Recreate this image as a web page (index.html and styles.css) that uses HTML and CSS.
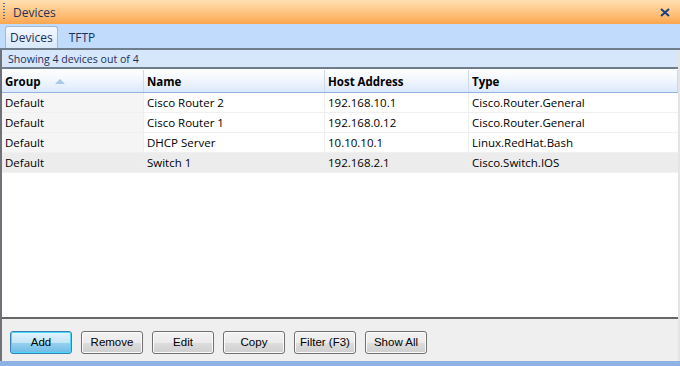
FILE: index.html
```html
<!DOCTYPE html>
<html>
<head>
<meta charset="utf-8">
<link rel="stylesheet" href="styles.css">
</head>
<body>
<div class="window">
  <div class="titlebar">
    <span class="grip"></span>
    <span class="title">Devices</span>
    <svg class="close" width="10" height="9" viewBox="0 0 10 9"><path d="M1 1 L9 8 M9 1 L1 8" stroke="#1b3f7a" stroke-width="2"/></svg>
  </div>
  <div class="tabs">
    <div class="tab active">Devices</div>
    <div class="tab">TFTP</div>
  </div>
  <div class="panel">
    <div class="status">Showing 4 devices out of 4</div>
    <div class="grid">
      <div class="row head">
        <div class="cell c1">Group<span class="sort"></span></div>
        <div class="cell c2">Name</div>
        <div class="cell c3">Host Address</div>
        <div class="cell c4">Type</div>
      </div>
      <div class="row">
        <div class="cell c1">Default</div>
        <div class="cell c2">Cisco Router 2</div>
        <div class="cell c3">192.168.10.1</div>
        <div class="cell c4">Cisco.Router.General</div>
      </div>
      <div class="row">
        <div class="cell c1">Default</div>
        <div class="cell c2">Cisco Router 1</div>
        <div class="cell c3">192.168.0.12</div>
        <div class="cell c4">Cisco.Router.General</div>
      </div>
      <div class="row">
        <div class="cell c1">Default</div>
        <div class="cell c2">DHCP Server</div>
        <div class="cell c3">10.10.10.1</div>
        <div class="cell c4">Linux.RedHat.Bash</div>
      </div>
      <div class="row sel">
        <div class="cell c1">Default</div>
        <div class="cell c2">Switch 1</div>
        <div class="cell c3">192.168.2.1</div>
        <div class="cell c4">Cisco.Switch.IOS</div>
      </div>
    </div>
    <div class="buttons">
      <button class="btn default">Add</button>
      <button class="btn">Remove</button>
      <button class="btn">Edit</button>
      <button class="btn">Copy</button>
      <button class="btn">Filter (F3)</button>
      <button class="btn">Show All</button>
    </div>
  </div>
  <div class="bottombar"></div>
</div>
</body>
</html>
```
FILE: styles.css
```css
html, body {
  margin: 0;
  padding: 0;
  background: #ffffff;
}
.window {
  width: 680px;
  height: 366px;
  display: flex;
  flex-direction: column;
  font-family: "Open Sans", "DejaVu Sans", sans-serif;
  font-size: 11.5px;
  color: #000;
  overflow: hidden;
}
.titlebar {
  height: 24px;
  flex: none;
  display: flex;
  align-items: center;
  background: linear-gradient(#ffdfb0 0%, #ffc888 45%, #fba64e 100%);
}
.grip {
  width: 2px;
  height: 18px;
  margin-left: 3px;
  background: repeating-linear-gradient(#4f6fa8 0 1px, transparent 1px 3px);
}
.title {
  margin-left: 8px;
  font-size: 12px;
  color: #1e2f5a;
}
.close {
  margin-left: auto;
  margin-right: 10px;
}
.tabs {
  height: 26px;
  flex: none;
  background: #c0dbfc;
  display: flex;
  align-items: flex-end;
  padding-left: 5px;
  border-bottom: 2px solid #6f7d8c;
  box-sizing: border-box;
}
.tab {
  height: 21px;
  padding: 0 5px;
  display: flex;
  align-items: center;
  font-size: 12px;
  color: #1e2f5a;
}
.tab.active {
  padding: 0 4px;
  background: linear-gradient(#f2f8ff, #d9e8fc);
  border: 1px solid #9db9dd;
  border-bottom: none;
  border-radius: 3px 3px 0 0;
  margin-right: 6px;
}
.panel {
  flex: 1;
  display: flex;
  flex-direction: column;
  border-left: 2px solid #6f7378;
  border-right: 2px solid #e4e4e4;
}
.status {
  height: 17px;
  flex: none;
  background: #d6e7fc;
  border-bottom: 2px solid #6f7d8c;
  padding-left: 6px;
  display: flex;
  align-items: center;
  font-size: 10.6px;
  color: #1e2f5a;
}
.grid {
  flex: 1;
  background: #fff;
  border-bottom: 2px solid #666;
}
.row {
  display: flex;
  height: 20px;
  border-bottom: 1px solid #f0f0f0;
  box-sizing: border-box;
}
.row.head {
  height: 24px;
  background: linear-gradient(#ffffff 0%, #f1f6fd 50%, #dbe9fb 100%);
  border-bottom: 1px solid #93b4de;
  font-weight: bold;
  padding-top: 1px;
}
.cell {
  display: flex;
  align-items: center;
  padding-left: 3px;
  box-sizing: border-box;
  white-space: nowrap;
  border-right: 1px solid #ededed;
}
.head .cell {
  border-right: 1px solid #c9daf0;
}
.c1 { width: 142px; background: #f5f5f5; }
.head .c1 { background: transparent; }
.c2 { width: 181px; }
.c3 { width: 144px; }
.c4 { flex: 1; border-right: none; }
.row.sel .cell { background: #ececec; }
.sort {
  width: 0;
  height: 0;
  border-left: 5px solid transparent;
  border-right: 5px solid transparent;
  border-bottom: 5px solid #a8c8ec;
  margin-left: 14px;
}
.buttons {
  height: 42px;
  flex: none;
  background: #efefef;
  display: flex;
  align-items: center;
  gap: 9px;
  padding-left: 8px;
  padding-top: 4px;
  box-sizing: border-box;
}
.btn {
  width: 62px;
  height: 23px;
  margin: 0;
  padding: 0;
  font-family: "Liberation Sans", Arial, sans-serif;
  font-size: 11.5px;
  color: #000;
  border: 1px solid #707070;
  border-radius: 3px;
  background: linear-gradient(#f2f2f2 0%, #ebebeb 50%, #dddddd 51%, #cfcfcf 100%);
  box-shadow: inset 0 0 0 1px #fbfbfb;
}
.btn.default {
  border-color: #3c7fb1;
  background: linear-gradient(#e5f4fc 0%, #c4e5f6 50%, #98d1ef 51%, #6cbbe6 100%);
  box-shadow: inset 0 0 0 1px #48d8fb;
}
.bottombar {
  height: 5px;
  flex: none;
  background: #8db2e3;
}
```
